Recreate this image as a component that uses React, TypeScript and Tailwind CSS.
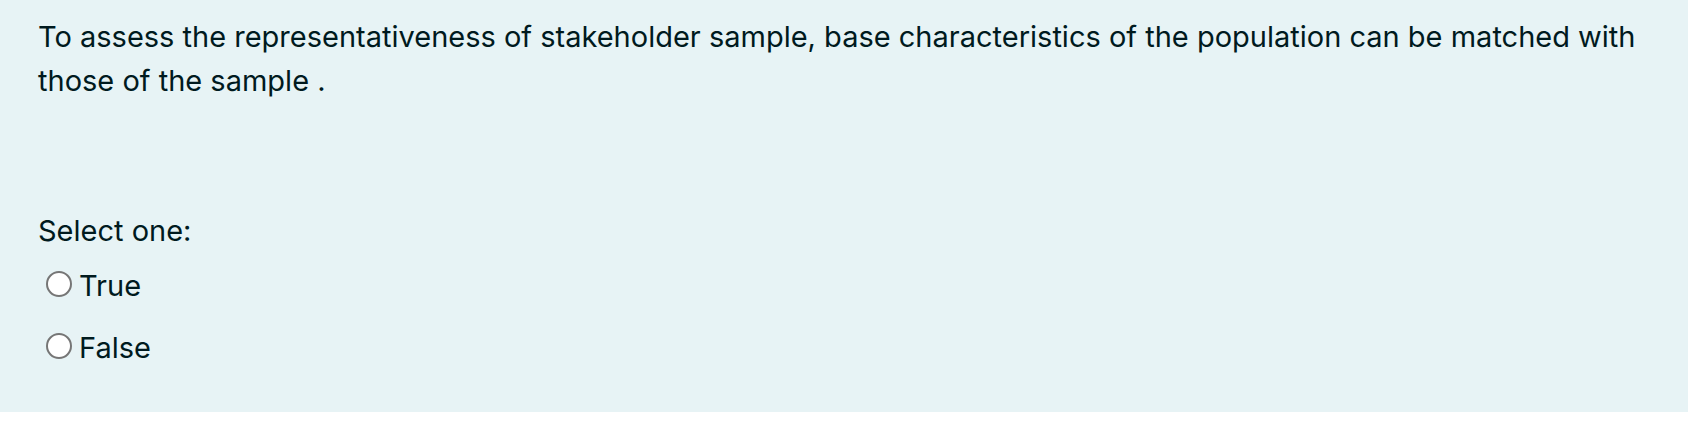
import React from 'react';

const options = ['True', 'False'];

export default function App() {
  return (
    <div className="w-[1702px] h-[430px] bg-white" style={{ fontFamily: 'Inter, "Noto Sans", sans-serif' }}>
      <div className="w-[1688px] h-[412px] bg-[#e7f3f5] text-[#001a1e] pl-[38px] pt-[15px] text-[29px] leading-[44px]">
        <div>
          To assess the representativeness of stakeholder sample, base characteristics of the population can be matched with
          <br />
          those of the sample .
        </div>
        <div className="mt-[106px]">Select one:</div>
        <div className="flex flex-col gap-[18px] pl-[8px] mt-[11px]">
          {options.map((o) => (
            <label key={o} className="flex items-center gap-[7px]">
              <span className="w-[26px] h-[26px] rounded-full border-2 border-[#767676] bg-white -mt-[5px]" />
              <span>{o}</span>
            </label>
          ))}
        </div>
      </div>
    </div>
  );
}
